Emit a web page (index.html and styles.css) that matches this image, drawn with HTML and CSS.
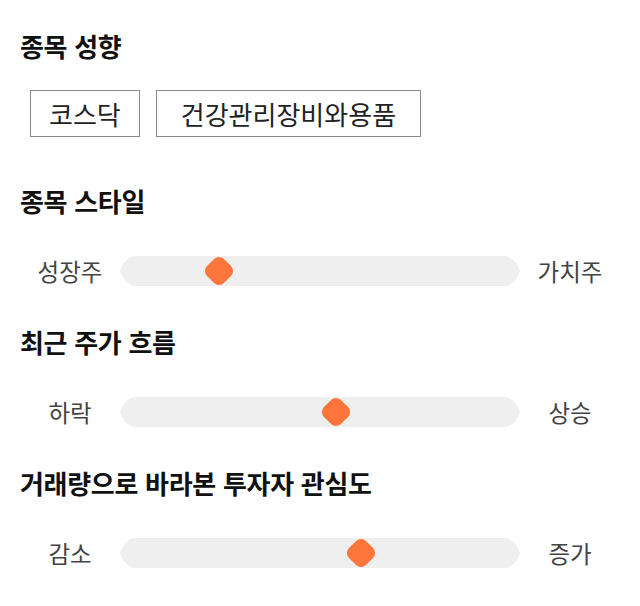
FILE: index.html
```html
<!DOCTYPE html>
<html lang="ko">
<head>
<meta charset="utf-8">
<link rel="stylesheet" href="styles.css">
</head>
<body>
<main class="page">
  <section class="group group-tags">
    <h2 class="title">종목 성향</h2>
    <div class="chips">
      <span class="chip">코스닥</span>
      <span class="chip chip-wide">건강관리장비와용품</span>
    </div>
  </section>

  <section class="group">
    <h2 class="title">종목 스타일</h2>
    <div class="slider">
      <span class="label">성장주</span>
      <div class="track">
        <svg class="track-bg" viewBox="0 0 400 30" preserveAspectRatio="none"><path d="M16,0 H384 C392,0 398,8 400,15 C398,22 392,30 384,30 H16 C8,30 2,22 0,15 C2,8 8,0 16,0 Z" fill="#efefef"/></svg>
        <span class="knob" style="left:99px"></span>
      </div>
      <span class="label">가치주</span>
    </div>
  </section>

  <section class="group">
    <h2 class="title">최근 주가 흐름</h2>
    <div class="slider">
      <span class="label">하락</span>
      <div class="track">
        <svg class="track-bg" viewBox="0 0 400 30" preserveAspectRatio="none"><path d="M16,0 H384 C392,0 398,8 400,15 C398,22 392,30 384,30 H16 C8,30 2,22 0,15 C2,8 8,0 16,0 Z" fill="#efefef"/></svg>
        <span class="knob" style="left:216px"></span>
      </div>
      <span class="label">상승</span>
    </div>
  </section>

  <section class="group">
    <h2 class="title">거래량으로 바라본 투자자 관심도</h2>
    <div class="slider">
      <span class="label">감소</span>
      <div class="track">
        <svg class="track-bg" viewBox="0 0 400 30" preserveAspectRatio="none"><path d="M16,0 H384 C392,0 398,8 400,15 C398,22 392,30 384,30 H16 C8,30 2,22 0,15 C2,8 8,0 16,0 Z" fill="#efefef"/></svg>
        <span class="knob" style="left:241px"></span>
      </div>
      <span class="label">증가</span>
    </div>
  </section>
</main>
</body>
</html>
```

FILE: styles.css
```css
* { box-sizing: border-box; }
html, body { margin: 0; padding: 0; background: #ffffff; }
body {
  font-family: "Noto Sans CJK KR", "Noto Sans", sans-serif;
  color: #222;
}
.page {
  width: 640px;
  padding: 30px 20px 0 20px;
}
.group + .group { margin-top: 40px; }
.group-tags + .group { margin-top: 48px; }
.title {
  margin: 0;
  font-size: 26px;
  line-height: 32px;
  font-weight: 700;
  color: #111;
  letter-spacing: -0.3px;
}
.chips {
  display: flex;
  gap: 16px;
  margin: 28px 0 0 10px;
}
.chip {
  display: inline-flex;
  align-items: center;
  height: 47px;
  padding: 0 18px;
  border: 1px solid #8a8a8a;
  font-size: 26px;
  color: #222;
}
.chip-wide { padding: 0 24px; }
.slider {
  display: flex;
  align-items: center;
  margin-top: 39px;
  height: 30px;
}
.label {
  width: 100px;
  text-align: center;
  font-size: 23.5px;
  line-height: 30px;
  color: #444;
}
.track {
  position: relative;
  width: 400px;
  height: 30px;
}
.track-bg {
  display: block;
  width: 400px;
  height: 30px;
}
.knob {
  position: absolute;
  top: 15px;
  width: 24px;
  height: 24px;
  margin-left: -12px;
  margin-top: -12px;
  background: #ff763c;
  border-radius: 7px;
  transform: rotate(45deg);
}
```
